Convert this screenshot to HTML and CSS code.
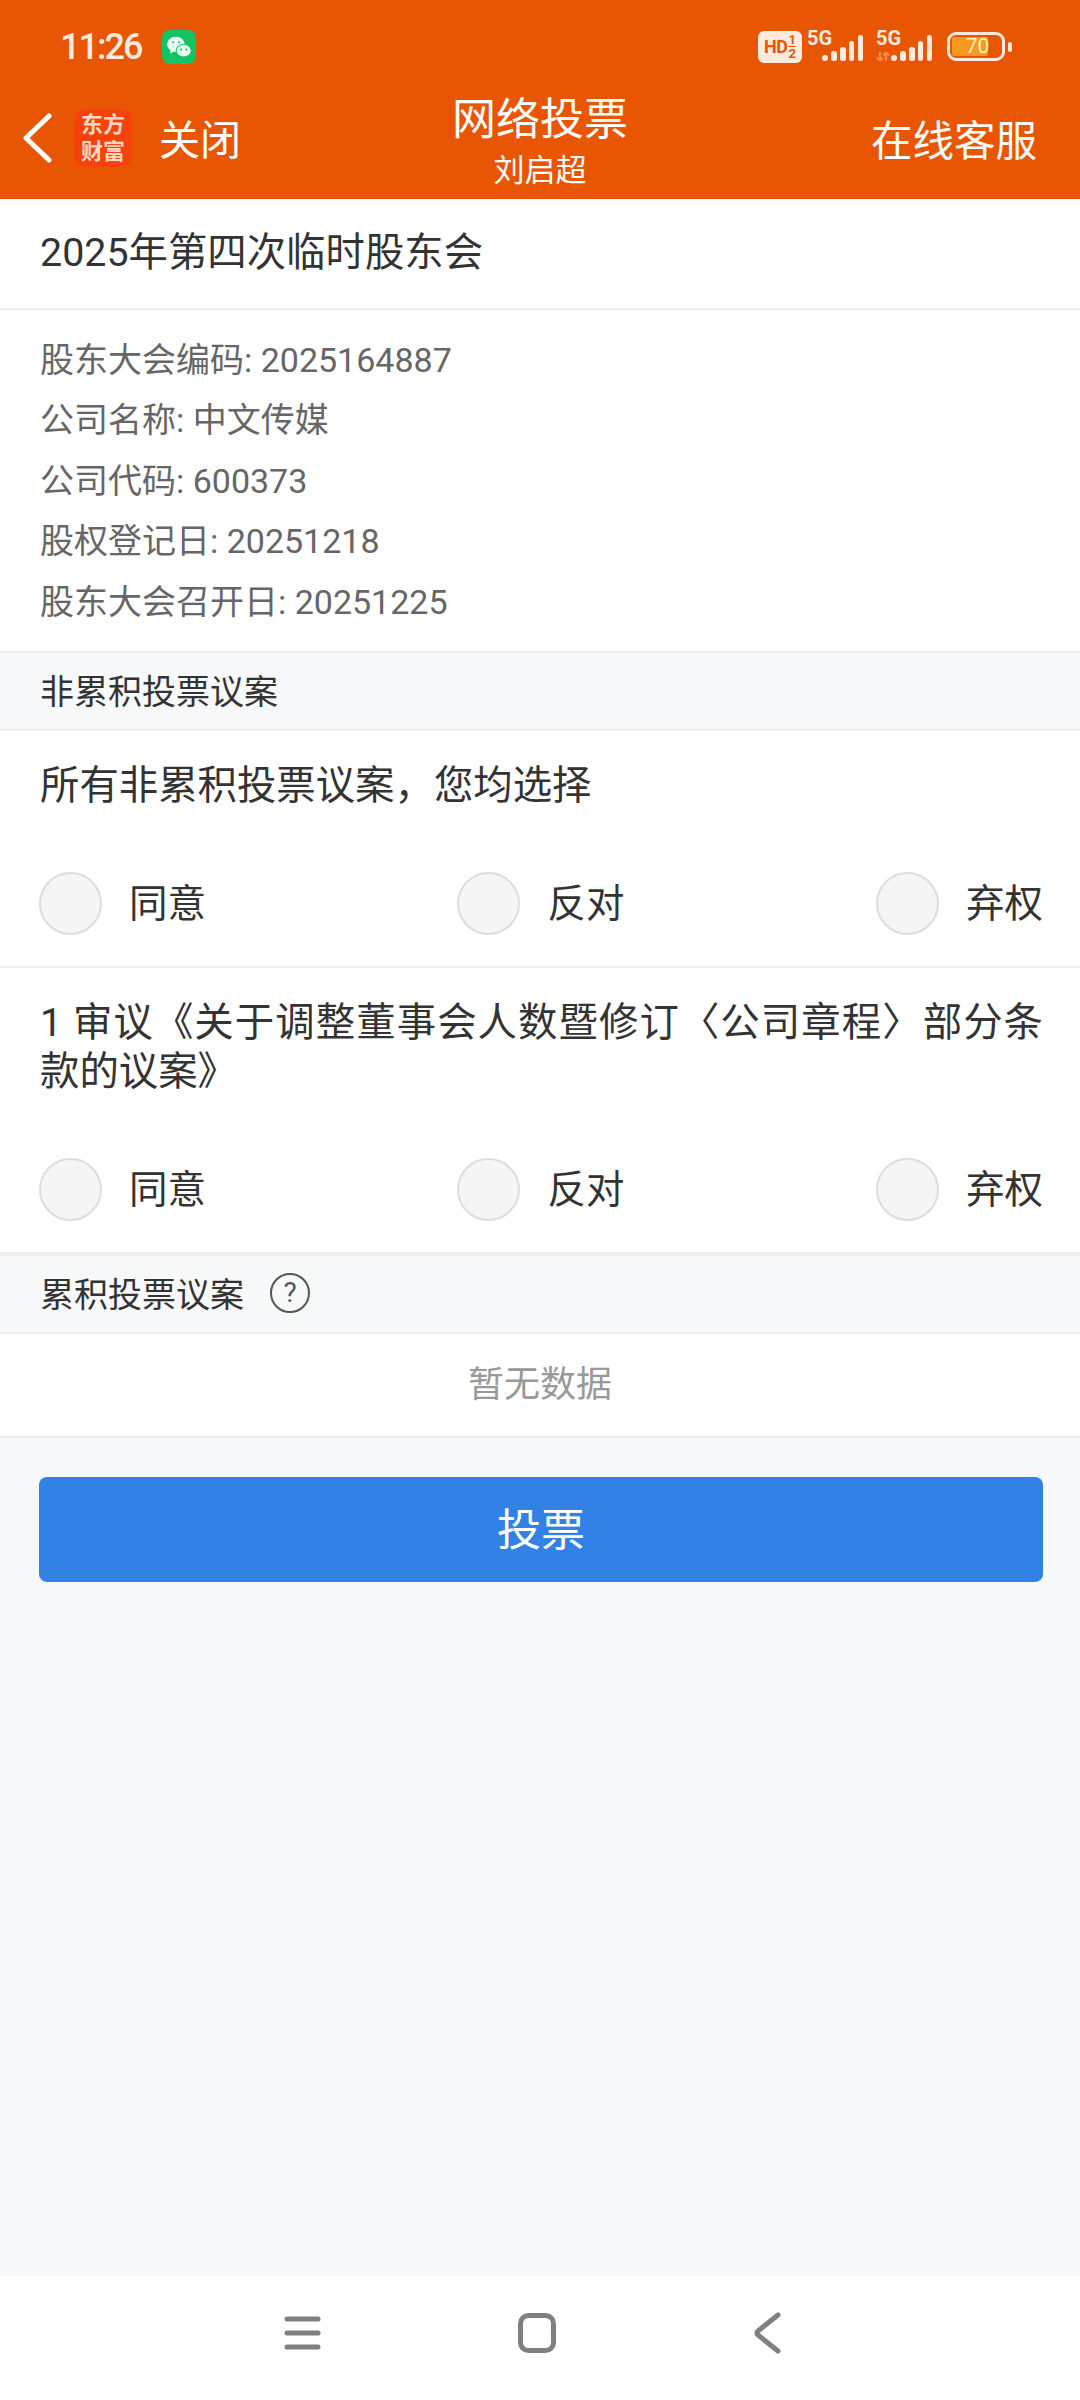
FILE: index.html
```html
<!DOCTYPE html>
<html lang="zh-CN">
<head>
    <meta charset="UTF-8">
    <meta name="viewport" content="width=device-width, initial-scale=1.0">
    <title>网络投票</title>
    <link rel="stylesheet" href="styles.css">
</head>
<body>
    <div class="page">
        <header class="top">
            <div class="status-bar">
                <div class="status-left">
                    <span class="time">11:26</span>
                    <span class="wechat">
                        <svg width="26" height="23" viewBox="0 0 24 22">
                            <ellipse cx="9" cy="8" rx="8.5" ry="7.2" fill="#eafff2"/>
                            <path d="M4 13 L3.5 17 L8 14 Z" fill="#eafff2"/>
                            <ellipse cx="16.5" cy="14" rx="7.2" ry="6.2" fill="#eafff2" stroke="#14c464" stroke-width="1"/>
                            <circle cx="6.5" cy="6" r="1" fill="#14c464"/>
                            <circle cx="12" cy="6" r="1" fill="#14c464"/>
                            <circle cx="14" cy="13" r="1" fill="#14c464"/>
                            <circle cx="19" cy="13" r="1" fill="#14c464"/>
                        </svg>
                    </span>
                </div>
                <div class="status-right">
                    <span class="hd-badge">
                        <span class="hd-text">HD</span>
                        <span class="hd-nums"><span>1</span><span class="hd-low">2</span></span>
                    </span>
                    <span class="net">
                        <span class="net-type">5G</span>
                        <svg class="bars" width="41" height="26" viewBox="0 0 41 26">
                            <rect x="0" y="20" width="6" height="6" rx="3"/>
                            <rect x="9" y="16" width="6" height="10" rx="2.5"/>
                            <rect x="18" y="12" width="6" height="14" rx="2.5"/>
                            <rect x="27" y="6" width="5" height="20" rx="2.5"/>
                            <rect x="36" y="0" width="5" height="26" rx="2.5"/>
                        </svg>
                    </span>
                    <span class="net">
                        <span class="net-type">5G</span>
                        <svg class="arrows" width="14" height="9" viewBox="0 0 14 9">
                            <path d="M4 0 V9 M1 5.5 L4 9 L7 5.5 M10 9 V0 M7.5 3.5 L10 0 L13 3.5" fill="none" stroke="#f58a55" stroke-width="2"/>
                        </svg>
                        <svg class="bars" width="41" height="26" viewBox="0 0 41 26">
                            <rect x="0" y="20" width="6" height="6" rx="3"/>
                            <rect x="9" y="16" width="6" height="10" rx="2.5"/>
                            <rect x="18" y="12" width="6" height="14" rx="2.5"/>
                            <rect x="27" y="6" width="5" height="20" rx="2.5"/>
                            <rect x="36" y="0" width="5" height="26" rx="2.5"/>
                        </svg>
                    </span>
                    <span class="battery">
                        <span class="battery-body">
                            <span class="battery-fill"></span>
                            <span class="battery-num">70</span>
                        </span>
                        <span class="battery-nub"></span>
                    </span>
                </div>
            </div>
            <nav class="nav-bar">
                <div class="nav-left">
                    <svg width="32" height="50" viewBox="0 0 32 50">
                        <path d="M28 3 L5 25 L28 47" fill="none" stroke="#fff" stroke-width="5" stroke-linecap="round" stroke-linejoin="round"/>
                    </svg>
                    <span class="logo">东方<br>财富</span>
                    <span class="close">关闭</span>
                </div>
                <div class="nav-title">
                    <div class="nav-main">网络投票</div>
                    <div class="nav-sub">刘启超</div>
                </div>
                <div class="nav-right">在线客服</div>
            </nav>
        </header>

        <main class="content">
            <div class="meeting-title">2025年第四次临时股东会</div>
            <div class="info">
                <div>股东大会编码: 2025164887</div>
                <div>公司名称: 中文传媒</div>
                <div>公司代码: 600373</div>
                <div>股权登记日: 20251218</div>
                <div>股东大会召开日: 20251225</div>
            </div>

            <div class="section-head">非累积投票议案</div>
            <div class="motion">
                <div class="motion-text">所有非累积投票议案，您均选择</div>
                <div class="choices">
                    <label class="choice"><span class="radio"></span><span class="choice-text">同意</span></label>
                    <label class="choice"><span class="radio"></span><span class="choice-text">反对</span></label>
                    <label class="choice"><span class="radio"></span><span class="choice-text">弃权</span></label>
                </div>
            </div>
            <div class="motion">
                <div class="motion-text">1 审议《关于调整董事会人数暨修订〈公司章程〉部分条款的议案》</div>
                <div class="choices">
                    <label class="choice"><span class="radio"></span><span class="choice-text">同意</span></label>
                    <label class="choice"><span class="radio"></span><span class="choice-text">反对</span></label>
                    <label class="choice"><span class="radio"></span><span class="choice-text">弃权</span></label>
                </div>
            </div>

            <div class="section-head">累积投票议案<span class="help">?</span></div>
            <div class="empty">暂无数据</div>

            <div class="submit-wrap">
                <button class="submit" type="button">投票</button>
            </div>
        </main>

        <footer class="sys-nav">
            <svg width="37" height="36" viewBox="0 0 37 36">
                <path d="M3 4 H34 M3 18 H34 M3 32 H34" stroke="#808080" stroke-width="5" stroke-linecap="round"/>
            </svg>
            <svg width="38" height="40" viewBox="0 0 38 40">
                <rect x="2.5" y="2.5" width="33" height="35" rx="8" fill="none" stroke="#808080" stroke-width="5"/>
            </svg>
            <svg width="28" height="42" viewBox="0 0 28 42">
                <path d="M25 3 L5 19 Q3 21 5 23 L25 39" fill="none" stroke="#808080" stroke-width="5" stroke-linecap="round" stroke-linejoin="round"/>
            </svg>
        </footer>
    </div>
</body>
</html>
```

FILE: styles.css
```css
* {
    box-sizing: border-box;
}

body {
    margin: 0;
    font-family: Roboto, "Noto Sans CJK SC", sans-serif;
    background-color: #f7f8fa;
    color: #333;
}

.page {
    display: flex;
    flex-direction: column;
    width: 1080px;
    height: 2400px;
    overflow: hidden;
}

/* orange top area */
.top {
    height: 199px;
    background-color: #e85603;
    color: #fff;
}

.status-bar {
    display: flex;
    justify-content: space-between;
    align-items: center;
    height: 86px;
    padding: 8px 68px 0 60px;
    color: #ffeadd;
}

.status-left {
    display: flex;
    align-items: center;
    gap: 21px;
}

.time {
    font-size: 36px;
    font-weight: 500;
    letter-spacing: -2px;
}

.wechat {
    display: flex;
    align-items: center;
    justify-content: center;
    width: 34px;
    height: 34px;
    border-radius: 8px;
    background-color: #14c464;
}

.status-right {
    display: flex;
    align-items: center;
}

.hd-badge {
    display: flex;
    align-items: center;
    justify-content: center;
    width: 44px;
    height: 32px;
    margin-top: -1px;
    border-radius: 6px;
    background-color: #ffeadd;
    color: #e85603;
    font-weight: 700;
}

.hd-text {
    font-size: 18px;
    letter-spacing: -0.5px;
}

.hd-nums {
    display: flex;
    flex-direction: column;
    margin-left: 1px;
    font-size: 13px;
    line-height: 13px;
}

.hd-low {
    border-top: 1px solid #e85603;
}

.net {
    position: relative;
    display: flex;
    align-items: flex-end;
    height: 30px;
    margin: 0 0 3px 5px;
}

.net + .net {
    margin-left: 13px;
}

.net-type {
    align-self: flex-start;
    width: 25px;
    margin-right: -10px;
    font-size: 20px;
    font-weight: 700;
    line-height: 15px;
}

.arrows {
    position: absolute;
    left: 0;
    bottom: 0;
}

.bars {
    fill: #ffeadd;
}

.battery {
    display: flex;
    align-items: center;
    gap: 3px;
    margin-left: 15px;
}

.battery-body {
    position: relative;
    display: flex;
    align-items: center;
    justify-content: center;
    width: 58px;
    height: 29px;
    margin-top: -1px;
    border: 3px solid #ffeadd;
    border-radius: 9px;
}

.battery-fill {
    position: absolute;
    top: 2px;
    bottom: 2px;
    left: 2px;
    width: 36px;
    border-radius: 2px;
    background-color: #f59a1f;
}

.battery-num {
    position: relative;
    margin-left: 3px;
    font-size: 21px;
    line-height: 21px;
    color: #fff0b8;
}

.battery-nub {
    width: 4px;
    height: 10px;
    border-radius: 2px;
    background-color: #ffeadd;
}

.nav-bar {
    display: grid;
    grid-template-columns: 1fr auto 1fr;
    align-items: center;
    height: 103px;
    padding: 0 21px;
}

.nav-left {
    display: flex;
    align-items: center;
}

.logo {
    display: block;
    width: 58px;
    height: 58px;
    margin-left: 21px;
    padding-top: 2px;
    border-radius: 11px;
    background-color: #f8420b;
    color: #ffd8c4;
    font-size: 22px;
    font-weight: 700;
    line-height: 27px;
    text-align: center;
}

.close {
    margin: 0 0 2px 27px;
    font-size: 41px;
}

.nav-title {
    padding-top: 5px;
    text-align: center;
}

.nav-main {
    font-size: 44px;
    line-height: 58px;
}

.nav-sub {
    margin-top: 3px;
    font-size: 31px;
    line-height: 38px;
}

.nav-right {
    margin-right: 22px;
    font-size: 41.5px;
    text-align: right;
}

.content {
    flex: 1;
}

.meeting-title {
    height: 111px;
    padding-left: 40px;
    border-bottom: 2px solid #eeeeee;
    background-color: #fff;
    font-size: 39.4px;
    line-height: 108px;
}

.info {
    padding: 20px 40px 19px;
    background-color: #fff;
    color: #666;
    font-size: 34px;
    line-height: 60.4px;
}

.section-head {
    display: flex;
    align-items: center;
    height: 80px;
    padding: 0 0 3px 40px;
    border-top: 2px solid #eeeeee;
    border-bottom: 2px solid #eeeeee;
    font-size: 34px;
}

.help {
    display: flex;
    align-items: center;
    justify-content: center;
    width: 40px;
    height: 40px;
    margin-left: 26px;
    border: 2px solid #555;
    border-radius: 50%;
    color: #555;
    font-size: 28px;
}

.motion {
    padding: 0 37px 0 39px;
    background-color: #fff;
    border-bottom: 2px solid #eeeeee;
}

.motion:last-of-type {
    border-bottom: none;
}

.motion-text {
    padding: 30px 0 30px 1px;
    font-size: 39.4px;
    line-height: 49px;
    text-align: justify;
}

.choices {
    display: flex;
    justify-content: space-between;
    align-items: center;
    height: 126px;
}

.choice {
    display: flex;
    align-items: center;
    gap: 27px;
    font-family: "Noto Sans CJK SC", sans-serif;
    font-size: 38.5px;
}

.choice-text {
    margin-bottom: 6px;
}

.radio {
    width: 63px;
    height: 63px;
    border: 2px solid #dddddd;
    border-radius: 50%;
    background-color: #f5f5f5;
}

.empty {
    height: 104px;
    border-bottom: 2px solid #eeeeee;
    background-color: #fff;
    color: #999;
    font-size: 36px;
    line-height: 102px;
    text-align: center;
}

.submit-wrap {
    padding: 39px 37px 39px 39px;
}

.submit {
    display: block;
    width: 100%;
    height: 105px;
    padding: 0 0 6px;
    border: none;
    border-radius: 8px;
    background-color: #3182e4;
    color: #fff;
    font-family: "Noto Sans CJK SC", sans-serif;
    font-size: 44px;
}

.sys-nav {
    display: flex;
    align-items: center;
    gap: 197px;
    height: 124px;
    padding: 0 0 10px 284px;
    background-color: #fff;
}
```
